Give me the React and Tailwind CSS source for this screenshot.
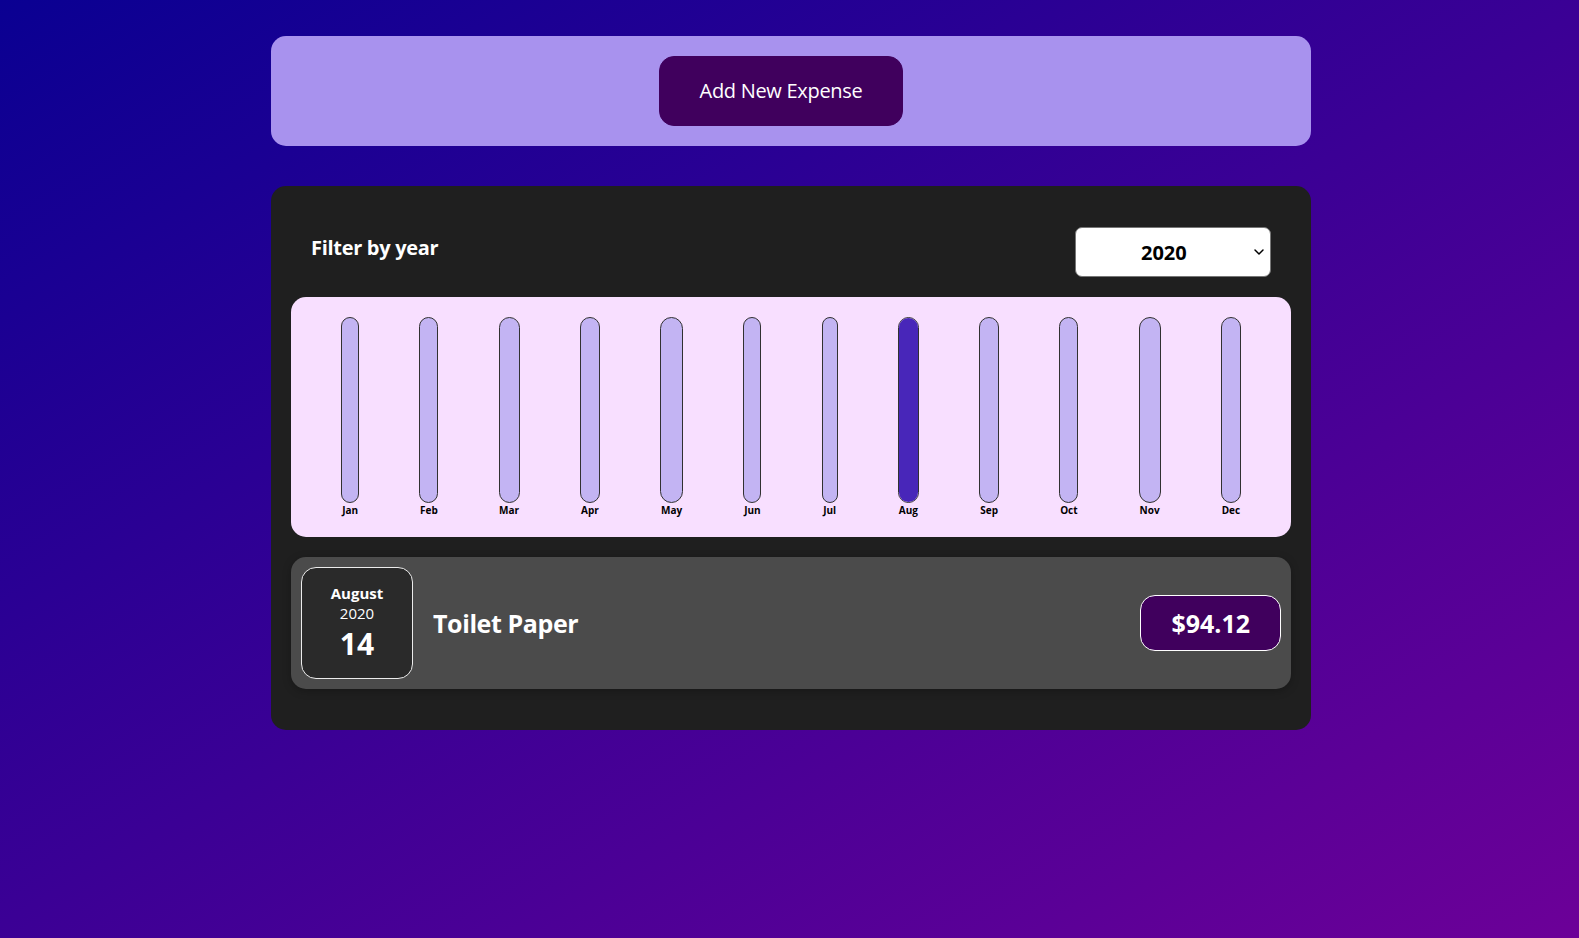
import { ChevronDown } from "lucide-react";

// bar width follows the label width in the original; widths kept per month here
const months = [
  ["Jan", 0, 18],
  ["Feb", 0, 19],
  ["Mar", 0, 21],
  ["Apr", 0, 20],
  ["May", 0, 23],
  ["Jun", 0, 18],
  ["Jul", 0, 16],
  ["Aug", 100, 21],
  ["Sep", 0, 20],
  ["Oct", 0, 19],
  ["Nov", 0, 22],
  ["Dec", 0, 20],
];

function ChartBar({ label, fill, width }) {
  return (
    <div className="flex h-full flex-col items-center" style={{ width }}>
      <div className="flex w-full flex-1 flex-col justify-end overflow-hidden rounded-[15px] border border-[#313131] bg-[#c3b4f3]">
        <div className="w-full bg-[#4826b9]" style={{ height: `${fill}%` }} />
      </div>
      <div className="text-[10px] font-bold leading-[14px] text-black">{label}</div>
    </div>
  );
}

function ExpenseDate() {
  return (
    <div className="flex h-[112px] w-[112px] shrink-0 flex-col items-center justify-center rounded-[15px] border border-[#ececec] bg-[#2a2a2a] text-white">
      <div className="text-[15px] font-bold">August</div>
      <div className="text-[15px]">2020</div>
      <div className="text-[30px] font-bold">14</div>
    </div>
  );
}

export default function App() {
  return (
    <div className="min-h-screen bg-[linear-gradient(150deg,#0a0092,#6c0098)] pt-[36px] pb-px pl-[3px] font-['Open_Sans',sans-serif] leading-[normal]">
      <div className="mx-auto w-[1040px] rounded-[15px] bg-[#a892ee] p-5 text-center">
        <button className="mr-5 rounded-[15px] border border-[#40005d] bg-[#40005d] px-10 py-5 text-[20px] leading-[28px] tracking-[-0.3px] text-white">
          Add New Expense
        </button>
      </div>

      <div className="mx-auto mt-10 mb-10 w-[1040px] rounded-[15px] bg-[#1f1f1f] px-5 pt-5 pb-[21px]">
        <div className="px-5 text-white">
          <div className="my-5 flex items-center justify-between pt-px">
            <label className="mb-[10px] text-[20px] font-bold tracking-[-0.3px]">Filter by year</label>
            <div className="relative">
              <select
                defaultValue="2020"
                className="h-[50px] w-[196px] appearance-none rounded-[7px] border border-[#767676] bg-white pl-[65px] text-[20px] font-bold text-black"
              >
                <option>2022</option>
                <option>2021</option>
                <option>2020</option>
                <option>2019</option>
              </select>
              <ChevronDown
                size={16}
                strokeWidth={2.25}
                className="pointer-events-none absolute top-[17px] right-[4px] text-black"
              />
            </div>
          </div>
        </div>

        <div className="flex h-[240px] justify-around rounded-[15px] bg-[#f8dfff] p-5 text-center">
          {months.map(([m, v, w]) => (
            <ChartBar key={m} label={m} fill={v} width={w} />
          ))}
        </div>

        <div className="my-5 flex items-center justify-between rounded-[15px] bg-[#4b4b4b] p-[10px] shadow-[0_2px_8px_rgba(0,0,0,0.25)]">
          <ExpenseDate />
          <div className="flex flex-1 items-center">
            <h2 className="mx-5 flex-1 text-[25px] font-bold tracking-[-0.4px] text-white">Toilet Paper</h2>
            <div className="rounded-[15px] border border-white bg-[#40005d] px-[30px] py-[10px] text-[25px] font-bold text-white">
              $94.12
            </div>
          </div>
        </div>
      </div>
    </div>
  );
}
